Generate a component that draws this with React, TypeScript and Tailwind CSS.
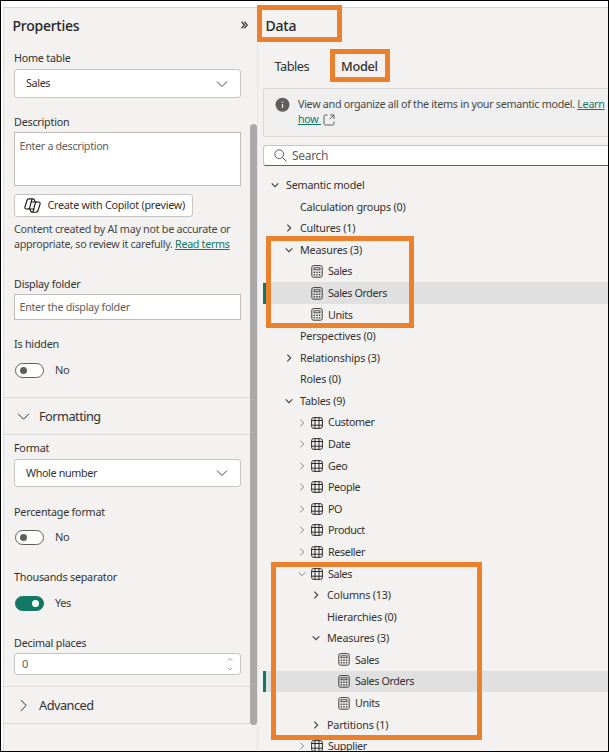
import React from "react";

const FONT = "font-['Noto_Sans','Open_Sans',sans-serif]";

type ChevronProps = { dir: "down" | "right"; size: number; width?: number; className?: string };

function Chevron({ dir, size, width = 1, className = "" }: ChevronProps) {
  return (
    <svg width={size} height={size} viewBox="0 0 12 12" fill="none" stroke="currentColor" strokeWidth={width} className={className}>
      <path vectorEffect="non-scaling-stroke" d={dir === "down" ? "M1 3.5 L6 8.5 L11 3.5" : "M3.5 1 L8.5 6 L3.5 11"} />
    </svg>
  );
}

function TableIcon() {
  return (
    <svg width="12" height="12" viewBox="0 0 12 12" fill="none" stroke="#2b2a29" strokeWidth="1">
      <rect x="0.6" y="0.6" width="10.8" height="10.8" rx="2.2" />
      <path d="M4 0.6V11.4M8 0.6V11.4M0.6 3.5H11.4M0.6 8.2H11.4" />
    </svg>
  );
}

function MeasureIcon() {
  return (
    <svg width="12" height="13" viewBox="0 0 12 13" fill="none" stroke="#3b3a39" strokeWidth="1">
      <rect x="0.8" y="0.6" width="10.4" height="11.6" rx="1.8" />
      <rect x="3" y="2.8" width="6" height="2" strokeWidth="0.9" />
      <g fill="#3b3a39" stroke="none">
        <rect x="2.6" y="6.6" width="1.5" height="1.4" />
        <rect x="5.2" y="6.6" width="1.5" height="1.4" />
        <rect x="7.8" y="6.6" width="1.5" height="1.4" />
        <rect x="2.6" y="9.1" width="1.5" height="1.4" />
        <rect x="5.2" y="9.1" width="1.5" height="1.4" />
        <rect x="7.8" y="9.1" width="1.5" height="1.4" />
      </g>
    </svg>
  );
}

function CopilotIcon() {
  return (
    <svg width="17" height="15" viewBox="0 0 17 15" fill="none" stroke="#1b1a19" strokeWidth="1.15" strokeLinejoin="round" strokeLinecap="round" className="shrink-0">
      <path d="M10.9 3.6 10.4 2Q10 .8 8.8.8H5Q3.6.8 3.1 2.3L1 8.8Q.4 11 2.5 11H4.2Q5.4 11 5.8 9.6L7.6 2.4Q8 .9 9 .8" />
      <path d="M6.1 11.4 6.6 13Q7 14.2 8.2 14.2H12Q13.4 14.2 13.9 12.7L16 6.2Q16.6 4 14.5 4H12.8Q11.6 4 11.2 5.4L9.4 12.6Q9 14.1 8 14.2" />
      <path d="M7.2 4H12.8M4.2 11H9.8" />
    </svg>
  );
}

function Label({ children, className = "" }: { children: React.ReactNode; className?: string }) {
  return <div className={`h-4 whitespace-nowrap text-[10.75px] font-[450] leading-4 tracking-[-0.22px] text-[#323130] ${className}`}>{children}</div>;
}

function Toggle({ on, className }: { on?: boolean; className: string }) {
  return (
    <div className={`ml-px flex h-[15px] items-center text-[11px] text-[#3b3a39] ${className}`}>
      <div className={`flex h-[15px] w-[29px] items-center rounded-full border ${on ? "justify-end border-[#117865] bg-[#117865] pr-1" : "border-[#605e5c] bg-white pl-1"}`}>
        <div className={`size-[7px] rounded-full ${on ? "bg-white" : "bg-[#605e5c]"}`} />
      </div>
      <span className="ml-[11px] tracking-[-0.4px]">{on ? "Yes" : "No"}</span>
    </div>
  );
}

function Select({ children, className }: { children: React.ReactNode; className: string }) {
  return (
    <div className={`flex w-[227px] items-center justify-between rounded-[3px] border border-[#c8c6c4] bg-white pl-[11px] pr-[12px] text-[10.75px] tracking-[-0.35px] text-[#323130] ${className}`}>
      {children}
      <Chevron dir="down" size={12} className="text-[#484644]" />
    </div>
  );
}

function Section({ dir, children }: { dir: "down" | "right"; children: React.ReactNode }) {
  return (
    <div className="flex h-[38px] items-center border-y border-[#dddbd9] pl-[13px] pt-px text-[#323130]">
      <Chevron dir={dir} size={13} />
      <span className="ml-[9px] text-[12.75px] tracking-[-0.52px]">{children}</span>
    </div>
  );
}

function Properties() {
  return (
    <section className="flex w-[254px] shrink-0 border-l border-[#e1dfdd]">
      <div className="w-[246px] shrink-0">
        <header className="flex h-[35px] items-center justify-between pb-px pl-[8.5px] pr-[2px]">
          <h1 className="text-[14px] font-medium tracking-[-0.25px] text-[#252423]">Properties</h1>
          <svg width="7" height="8" viewBox="0 0 7 8" fill="none" stroke="#3b3a39" strokeWidth="1.3">
            <path d="M0.6 0.8 3.4 4 0.6 7.2M3.4 0.8 6.2 4 3.4 7.2" />
          </svg>
        </header>
        <div className="h-[354px] pl-[10px] pt-[7px]">
          <Label>Home table</Label>
          <Select className="mt-[3px] h-[29px]">Sales</Select>
          <Label className="mt-4">Description</Label>
          <div className="mt-[2px] h-[54px] w-[227px] border border-[#bebbb8] bg-white px-[4.5px] pt-[5px] text-[10.75px] leading-4 tracking-[-0.32px] text-[#605e5c]">Enter a description</div>
          <button className="mt-2 flex h-[23px] w-[179px] items-center rounded-[3px] border border-[#c8c6c4] bg-white pl-[8.5px] text-[10.75px] text-[#323130]">
            <CopilotIcon />
            <span className="ml-[7px] whitespace-nowrap tracking-[-0.25px]">Create with Copilot (preview)</span>
          </button>
          <p className="mt-[5px] whitespace-nowrap text-[10.75px] leading-[15px] tracking-[-0.28px] text-[#484644]">
            Content created by AI may not be accurate or
            <br />
            <span className="tracking-[-0.32px]">
              appropriate, so review it carefully. <a className="text-[#117865] underline">Read terms</a>
            </span>
          </p>
          <Label className="mt-6">Display folder</Label>
          <div className="mt-[2px] flex h-[26px] w-[227px] items-center border border-[#bebbb8] bg-white px-[4.5px] pt-px text-[10.75px] tracking-[-0.3px] text-[#605e5c]">Enter the display folder</div>
          <Label className="mt-4">Is hidden</Label>
          <Toggle className="mt-[11px]" />
        </div>
        <Section dir="down">Formatting</Section>
        <div className="h-[251px] pl-[10px] pt-[5px]">
          <Label>Format</Label>
          <Select className="mt-[3px] h-[28px]">Whole number</Select>
          <Label className="mt-[17px]">Percentage format</Label>
          <Toggle className="mt-[10px]" />
          <Label className="mt-6">Thousands separator</Label>
          <Toggle on className="mt-[11px]" />
          <Label className="mt-6">Decimal places</Label>
          <div className="mt-[2px] flex h-[22px] w-[227px] items-center justify-between rounded-[3px] border border-[#c8c6c4] bg-white pl-[7px] pr-[7px] text-[11px] text-[#605e5c]">
            0
            <svg width="6" height="14" viewBox="0 0 6 14" fill="none" stroke="#8a8886" strokeWidth="0.8">
              <path d="M0.8 3.7 3 1.5 5.2 3.7M0.8 10.8 3 13 5.2 10.8" />
            </svg>
          </div>
        </div>
        <Section dir="right">Advanced</Section>
      </div>
      <div className="mt-[116px] h-[601px] w-[7px] shrink-0 rounded-full bg-[#aaa8a8]" />
    </section>
  );
}

type Row = { text: string; kind: "group" | "table" | "measure"; level: 0 | 1 | 2 | 3 | 4; open?: boolean; leaf?: boolean; selected?: boolean };

const rows: Row[] = [
  { text: "Semantic model", kind: "group", level: 0, open: true },
  { text: "Calculation groups (0)", kind: "group", level: 1, leaf: true },
  { text: "Cultures (1)", kind: "group", level: 1 },
  { text: "Measures (3)", kind: "group", level: 1, open: true },
  { text: "Sales", kind: "measure", level: 2 },
  { text: "Sales Orders", kind: "measure", level: 2, selected: true },
  { text: "Units", kind: "measure", level: 2 },
  { text: "Perspectives (0)", kind: "group", level: 1, leaf: true },
  { text: "Relationships (3)", kind: "group", level: 1 },
  { text: "Roles (0)", kind: "group", level: 1, leaf: true },
  { text: "Tables (9)", kind: "group", level: 1, open: true },
  { text: "Customer", kind: "table", level: 2 },
  { text: "Date", kind: "table", level: 2 },
  { text: "Geo", kind: "table", level: 2 },
  { text: "People", kind: "table", level: 2 },
  { text: "PO", kind: "table", level: 2 },
  { text: "Product", kind: "table", level: 2 },
  { text: "Reseller", kind: "table", level: 2 },
  { text: "Sales", kind: "table", level: 2, open: true },
  { text: "Columns (13)", kind: "group", level: 3 },
  { text: "Hierarchies (0)", kind: "group", level: 3, leaf: true },
  { text: "Measures (3)", kind: "group", level: 3, open: true },
  { text: "Sales", kind: "measure", level: 4 },
  { text: "Sales Orders", kind: "measure", level: 4, selected: true },
  { text: "Units", kind: "measure", level: 4 },
  { text: "Partitions (1)", kind: "group", level: 3 },
  { text: "Supplier", kind: "table", level: 2 },
];

const indents = ["pl-[5px]", "pl-[19px]", "pl-[32px]", "pl-[46px]", "pl-[59px]"];

function TreeRow({ row }: { row: Row }) {
  const group = row.kind === "group";
  return (
    <div className={`flex h-[21.58px] shrink-0 items-center whitespace-nowrap text-[10.75px] text-[#323130] ${row.selected ? "bg-[#e1e0e0]" : ""}`}>
      <span className={`h-[21px] w-[3px] shrink-0 ${row.selected ? "bg-[#117865]" : ""}`} />
      <span className={`flex items-center ${indents[row.level]}`}>
        <span className="flex w-[15px] shrink-0">
          {!row.leaf && row.kind !== "measure" && (
            <Chevron dir={row.open ? "down" : "right"} size={8} width={group ? 1.2 : 0.9} className={group ? "text-[#484644]" : "text-[#797775]"} />
          )}
        </span>
        {!group && <span className="-ml-[2px] mr-[5px] shrink-0">{row.kind === "table" ? <TableIcon /> : <MeasureIcon />}</span>}
        <span className={group ? "font-[450] tracking-[-0.2px]" : "tracking-[-0.38px]"}>{row.text}</span>
      </span>
    </div>
  );
}

function DataPane() {
  return (
    <section className="flex min-w-0 flex-1 flex-col border-l border-[#e6e4e2] pl-[5px]">
      <header className="flex h-[35px] items-center pb-px pl-[2.5px]">
        <h1 className="text-[14px] font-medium tracking-[-0.2px] text-[#252423]">Data</h1>
      </header>
      <nav className="flex h-[45px] items-center pl-[11.5px] pt-[2px] text-[12.75px] text-[#323130]">
        <span className="w-[66.5px] tracking-[-0.5px]">Tables</span>
        <span className="font-medium tracking-[-0.3px]">Model</span>
      </nav>
      <div className="flex h-[49px] shrink-0 rounded-l-[2px] border border-r-0 border-[#dcdad8] bg-[#efefef] pl-[11px] pt-[8px]">
        <svg width="15" height="15" viewBox="0 0 15 15" className="shrink-0">
          <circle cx="7.5" cy="7.8" r="7" fill="#605e5c" />
          <path d="M7.5 7V11M7.5 4.5V5.7" stroke="#f3f2f1" strokeWidth="1.1" />
        </svg>
        <div className="ml-[8px] whitespace-nowrap text-[10.75px] leading-[15px] tracking-[-0.3px] text-[#484644]">
          View and organize all of the items in your semantic model. <a className="text-[#117865] underline">Learn</a>
          <div className="flex items-center">
            <a className="whitespace-pre text-[#117865] underline">how </a>
            <svg width="12" height="12" viewBox="0 0 12 12" fill="none" stroke="#605e5c" strokeWidth="1" className="ml-[2px]">
              <path d="M4.5 1H2.3Q1 1 1 2.3V9.7Q1 11 2.3 11H9.7Q11 11 11 9.7V7.5M7 1H11V5M11 1 6.8 5.2" />
            </svg>
          </div>
        </div>
      </div>
      <div className="mt-[8px] flex h-[21px] shrink-0 items-center rounded-l-[3px] border border-r-0 border-[#c8c6c4] border-b-[#605e5c] bg-white pl-[10px]">
        <svg width="13" height="13" viewBox="0 0 13 13" fill="none" stroke="#605e5c" strokeWidth="1">
          <circle cx="5.2" cy="5.2" r="4.4" />
          <path d="M8.4 8.4 12.5 12.5" />
        </svg>
        <span className="ml-[5px] text-[12px] tracking-[-0.3px] text-[#605e5c]">Search</span>
      </div>
      <div className="mt-[8.4px] flex flex-1 flex-col overflow-hidden">
        {rows.map((row, i) => (
          <TreeRow key={i} row={row} />
        ))}
      </div>
    </section>
  );
}

export default function App() {
  return (
    <div className={`relative flex h-[752px] w-[609px] flex-col overflow-hidden border border-black bg-white ${FONT}`}>
      <div className="h-[6px] shrink-0 bg-white" />
      <div className="ml-[2px] flex min-h-0 flex-1 border-t border-[#d6d5d4] bg-[#f3f2f1]">
        <Properties />
        <DataPane />
      </div>
      <div className="absolute left-[256px] top-[4px] h-[37px] w-[85px] border-[5px] border-[#ec812d]" />
      <div className="absolute left-[329px] top-[48px] h-[33px] w-[60px] border-[5px] border-[#ec812d]" />
      <div className="absolute left-[265px] top-[235px] h-[92px] w-[148px] border-[5px] border-[#ec812d]" />
      <div className="absolute left-[270px] top-[561px] h-[178px] w-[211px] border-[5px] border-[#ec812d]" />
    </div>
  );
}
